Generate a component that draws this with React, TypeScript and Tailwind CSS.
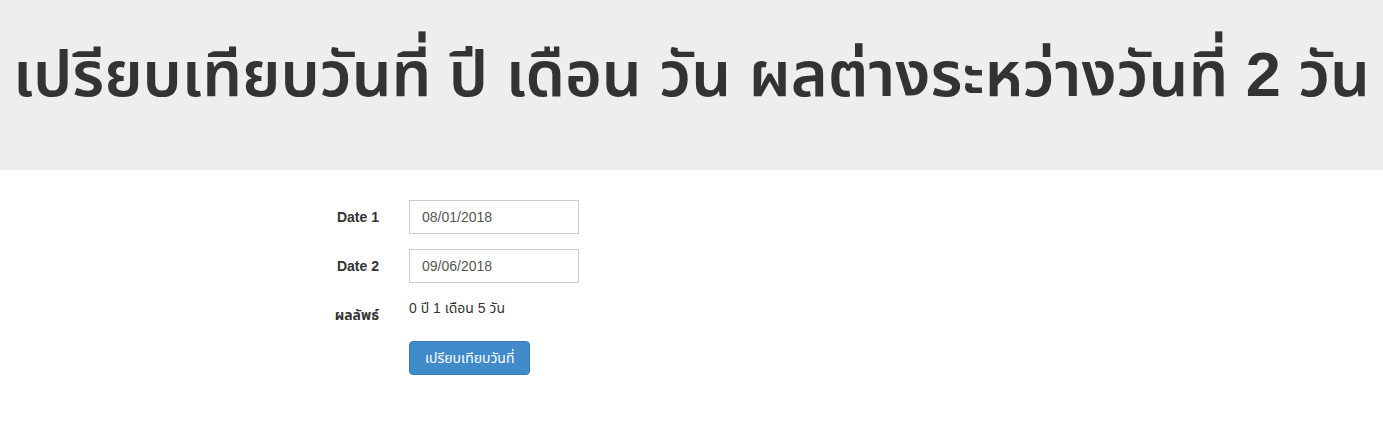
import { useState } from 'react'

const font = { fontFamily: '"Liberation Sans", "Noto Sans Thai", Tahoma, "Noto Sans", sans-serif' }

function diffText(a: string, b: string) {
  // dd/mm/yyyy
  const [d1, m1, y1] = a.split('/').map(Number)
  const [d2, m2, y2] = b.split('/').map(Number)
  let y = y2 - y1
  let m = m2 - m1
  let d = d2 - d1
  if (d < 0) {
    m -= 1
    d += new Date(y2, m2 - 1, 0).getDate()
  }
  if (m < 0) {
    y -= 1
    m += 12
  }
  return `${y} ปี ${m} เดือน ${d} วัน`
}

export default function App() {
  const [date1, setDate1] = useState('08/01/2018')
  const [date2, setDate2] = useState('09/06/2018')
  const [result, setResult] = useState('0 ปี 1 เดือน 5 วัน')

  return (
    <div className="min-h-screen bg-white text-[14px] text-[#333]" style={font}>
      <div className="h-[170px] bg-[#eeeeee] flex items-center justify-center">
        <h1 className="text-[63px] leading-[1.1] font-semibold text-[#333] whitespace-nowrap -mt-[20px]">
          เปรียบเทียบวันที่ ปี เดือน วัน ผลต่างระหว่างวันที่ 2 วัน
        </h1>
      </div>

      <form
        className="pt-[30px] flex flex-col gap-[15px]"
        onSubmit={e => {
          e.preventDefault()
          setResult(diffText(date1, date2))
        }}
      >
        <div className="flex items-center">
          <label className="w-[394px] pr-[15px] text-right font-bold">Date 1</label>
          <div className="pl-[15px]">
            <input
              value={date1}
              onChange={e => setDate1(e.target.value)}
              className="w-[170px] h-[34px] border border-[#ccc] px-[12px] text-[#555] outline-none"
            />
          </div>
        </div>

        <div className="flex items-center">
          <label className="w-[394px] pr-[15px] text-right font-bold">Date 2</label>
          <div className="pl-[15px]">
            <input
              value={date2}
              onChange={e => setDate2(e.target.value)}
              className="w-[170px] h-[34px] border border-[#ccc] px-[12px] text-[#555] outline-none"
            />
          </div>
        </div>

        <div className="flex items-start">
          <label className="w-[394px] pr-[15px] pt-[7px] text-right font-bold">ผลลัพธ์</label>
          <div className="pl-[15px]">{result}</div>
        </div>

        <div className="flex pl-[409px]">
          <button
            type="submit"
            className="h-[34px] px-[15px] rounded-[4px] bg-[#428bca] border border-[#357ebd] text-white"
          >
            เปรียบเทียบวันที่
          </button>
        </div>
      </form>
    </div>
  )
}
